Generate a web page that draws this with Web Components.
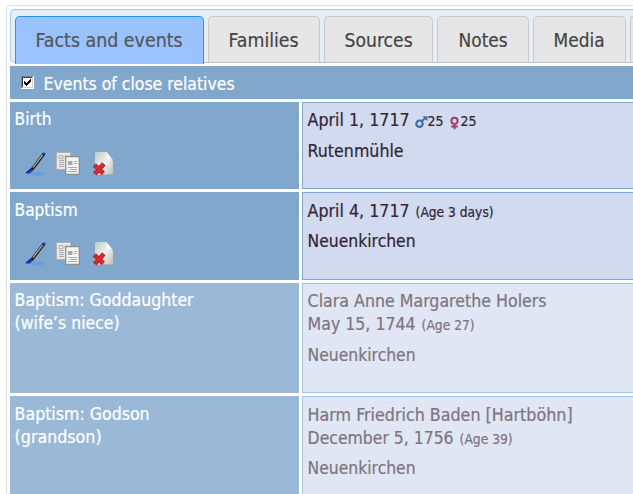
<!DOCTYPE html>
<html lang="en"><head><meta charset="utf-8"><title>Facts and events</title>
<style>
body{margin:0;width:633px;height:494px;overflow:hidden;background:#fff;font:17px/23px "DejaVu Sans Condensed","DejaVu Sans",sans-serif;font-stretch:condensed}
</style></head><body>
<tab-panel>
<tab-bar slot="tabs">
<tab-item active style="width:189px"><fit-text w="147">Facts and events</fit-text></tab-item>
<tab-item style="width:112px"><fit-text w="70">Families</fit-text></tab-item>
<tab-item style="width:109px"><fit-text w="68">Sources</fit-text></tab-item>
<tab-item style="width:92px"><fit-text w="49">Notes</fit-text></tab-item>
<tab-item style="width:93px"><fit-text w="51">Media</fit-text></tab-item>
<tab-item style="flex:1;border-right:0;border-top-right-radius:0"></tab-item>
</tab-bar>
<relatives-toggle><fit-text w="191">Events of close relatives</fit-text></relatives-toggle>
<fact-row style="height:87px;--place-gap:8px"><fit-text slot="label" w="37">Birth</fit-text><edit-tools slot="label"></edit-tools>
<fact-date><fit-text w="102">April 1, 1717</fit-text><parent-age sex="m"><fit-text w="16">25</fit-text></parent-age><parent-age sex="f"><fit-text w="16">25</fit-text></parent-age></fact-date>
<fact-place><fit-text w="96">Rutenmühle</fit-text></fact-place></fact-row>
<fact-row style="height:88px;--shift:1px"><fit-text slot="label" w="63">Baptism</fit-text><edit-tools slot="label" style="margin-top:18px"></edit-tools>
<fact-date><fit-text w="102">April 4, 1717</fit-text><age-note><fit-text w="78">(Age 3 days)</fit-text></age-note></fact-date>
<fact-place><fit-text w="108">Neuenkirchen</fit-text></fact-place></fact-row>
<fact-row muted style="height:110px;--place-gap:8px"><fit-text slot="label" w="179">Baptism: Goddaughter</fit-text><fit-text slot="label" w="105">(wife’s niece)</fit-text>
<fit-text w="239">Clara Anne Margarethe Holers</fit-text>
<fact-date><fit-text w="108">May 15, 1744</fit-text><age-note><fit-text w="53">(Age 27)</fit-text></age-note></fact-date>
<fact-place><fit-text w="108">Neuenkirchen</fit-text></fact-place></fact-row>
<fact-row muted style="height:110px;--shift:1px"><fit-text slot="label" w="135">Baptism: Godson</fit-text><fit-text slot="label" w="87">(grandson)</fit-text>
<fit-text w="265">Harm Friedrich Baden [Hartböhn]</fit-text>
<fact-date><fit-text w="146">December 5, 1756</fit-text><age-note><fit-text w="53">(Age 39)</fit-text></age-note></fact-date>
<fact-place><fit-text w="108">Neuenkirchen</fit-text></fact-place></fact-row>
</tab-panel>
<script>
const define=(name,html,init)=>customElements.define(name,class extends HTMLElement{
 constructor(){super();this.attachShadow({mode:"open"}).innerHTML=html}
 connectedCallback(){if(init)init.call(this)}
});
define("tab-panel",`<style>:host{display:block;box-sizing:border-box;margin:5px 0 0 6px;width:627px;height:489px;overflow:hidden;border:1px solid #d9dde0;border-width:1px 0 0 1px;border-radius:5px 0 0 0;padding:3px 0 0 3px}
.body{display:flex;flex-direction:column;gap:3px;margin-top:3px}</style><slot name="tabs"></slot><div class="body"><slot></slot></div>`);
define("tab-bar",`<style>:host{display:flex;box-sizing:border-box;gap:4px;height:54px;border:1px solid #aec7da;border-right:0;border-radius:5px 0 0 5px;background:#e5edf5;padding:6px 0 0 4px}</style><slot></slot>`);
define("tab-item",`<style>:host{display:flex;flex:none;box-sizing:border-box;justify-content:center;height:46px;border:1px solid #c9c9c9;border-bottom:0;border-radius:5px 5px 0 0;background:#e6e6e6;color:#444;font-size:19.5px;line-height:48px}
:host([active]){height:48px;background:#99c2ff;border-color:#2694e8;color:#555}</style><slot></slot>`);
define("relatives-toggle",`<style>:host{display:flex;box-sizing:border-box;height:33px;background:#81a8cc;color:#fff;padding:7px 0 0 11px;gap:10px}
svg{margin-top:3px;flex:none}</style><svg width="13" height="13" shape-rendering="crispEdges"><path fill="#fff" d="M0 0h13v13H0z"/><path fill="#808080" d="M0 0h12v1H1v11H0z"/><path fill="#404040" d="M1 1h10v1H2v9H1z"/><path fill="#d4d0c8" d="M11 1h1v11H1v-1h10z"/><path fill="#000" d="M3 5h1v1h1v1h1v-1h1v-1h1v-1h1v-1h1v3h-1v1h-1v1h-1v1h-1v1h-1v-1h-1v-1h-1z"/></svg><slot></slot>`);
define("fact-row",`<style>:host{display:grid;grid-template-columns:289px minmax(0,1fr);gap:3px;flex:none;color:#322634}
.l,.v{box-sizing:border-box}.l{background:#81a8cc;color:#fff;padding:calc(6px + var(--shift,0px)) 0 0 5px}.v{background:#d1daef;border:1px solid #81a8cc;border-right:0;padding:calc(6px + var(--shift,0px)) 0 0 5px}
:host([muted]) .l{background:#9ab9d6}:host([muted]) .v{background:#e0e6f4;border-color:#a7c2db;color:#7d757e}</style><div class="l"><slot name="label"></slot></div><div class="v"><slot></slot></div>`);
define("fact-date",`<style>:host{display:flex;height:23px}</style><slot></slot>`);
define("fact-place",`<style>:host{display:block;margin-top:var(--place-gap,7px)}</style><slot></slot>`);
define("age-note",`<style>:host{display:block;margin-left:6px;font-size:13.4px;line-height:25px}</style><slot></slot>`);
define("parent-age",`<style>:host{display:flex;margin-left:4.500px;font-size:13.4px;line-height:25px}svg{flex:none}.f{display:none}
:host([sex=f]){margin-left:5px}:host([sex=f]) .m{display:none}:host([sex=f]) .f{display:block}</style>
<svg class="m" width="13" height="23" fill="none"><circle cx="4.500" cy="14.700" r="3.200" stroke="#3b6fa8" stroke-width="2.200"/><path d="M7 12l3.500-3" stroke="#3b6fa8" stroke-width="2"/><path d="M7.500 7.300h5v5z" fill="#3b6fa8"/></svg>
<svg class="f" width="12" height="23" fill="none" stroke="#a83a70"><circle cx="5.500" cy="11.800" r="3.100" stroke-width="2"/><path d="M5.500 15v5.200M2.200 17.600h6.600" stroke-width="2"/></svg><slot></slot>`);
define("edit-tools",`<style>:host{display:flex;gap:9px;margin:19px 0 0 9px;height:26px}</style>
<svg width="24" height="26" viewBox="0 0 24 26"><defs><filter id="b"><feGaussianBlur stdDeviation=".9"/></filter></defs><ellipse cx="14" cy="23.500" rx="7" ry="1.400" fill="#4c8aee" opacity=".65" filter="url(#b)"/><path d="M6 19.500L18.500 3l2.700 1.700L8.800 21z" fill="#222"/><path d="M9 17.500L18.700 4.800" stroke="#b6b6b6" stroke-width="1.200"/><path d="M18.500 3.300l1.200-1 2.200 1.500-1 1.600zM6 18.600l2.800 2.200-2.800 2.600H2.400L1.500 23z" fill="#123fc8"/><path d="M2 22.900l4.500-3.200" stroke="#0a1e90"/></svg>
<svg width="24" height="26" viewBox="0 0 24 26" style="margin-left:-1px"><path d="M.5 2.500h14v17H.5z" fill="#e8e8e7" stroke="#b0b0ae"/><path d="M3 5.700h4v3H3zM8.500 6h4M8.500 8h4M3 10.500h5M3 12.500h5M3 14.500h5M3 16.500h5" stroke="#aaa" fill="none"/><path d="M9.700 6.700h13.600v17.600H9.700z" fill="#f4f4f3" stroke="#8e8e8c" stroke-width="1.300"/><path d="M12 11h4.500v4H12z" fill="#a5a5a5"/><path d="M18 11.500h3M18 13.500h3M12 17.500h9M14 19.500h7M12 21.500h9" stroke="#aaa"/></svg>
<svg width="26" height="26" viewBox="0 0 26 26" style="margin-left:1px"><defs><linearGradient id="g" x2="1" y2="1"><stop stop-color="#c0c6c1"/><stop offset=".5" stop-color="#f1f2ef"/><stop offset="1" stop-color="#b8beba"/></linearGradient></defs><path d="M5 3q0-1 1-1h10.500q1 4 6.500 9v14H7q-2 0-2-2z" fill="url(#g)"/><path d="M16.500 2l6.500 8q-3-2-7-1.500 1-3 .5-6.500z" fill="#fafafa"/><path d="M8 25h15" stroke="#8f9aa0"/><path d="M4.300 14.800l9 8.600M13.800 13.900l-9 10.100" stroke="#a91626" stroke-width="4.600"/><path d="M4.500 14.900l8.800 8.400M13.500 14.100l-8.500 9.600" stroke="#d52c34" stroke-width="3"/></svg>`);
/* Scales a line of text horizontally to the width given in its w attribute. */
define("fit-text",`<style>:host{display:block;white-space:pre;flex:none}span{display:inline-block;transform-origin:0 0;-webkit-text-stroke:.2px currentColor}</style><span><slot></slot></span>`,function(){
 const s=this.shadowRoot.querySelector("span"),w=+this.getAttribute("w"),k=w/s.getBoundingClientRect().width;
 this.style.width=w+"px";s.style.transform="translateX(-.4px) scaleX("+k+")";
});
</script></body></html>
